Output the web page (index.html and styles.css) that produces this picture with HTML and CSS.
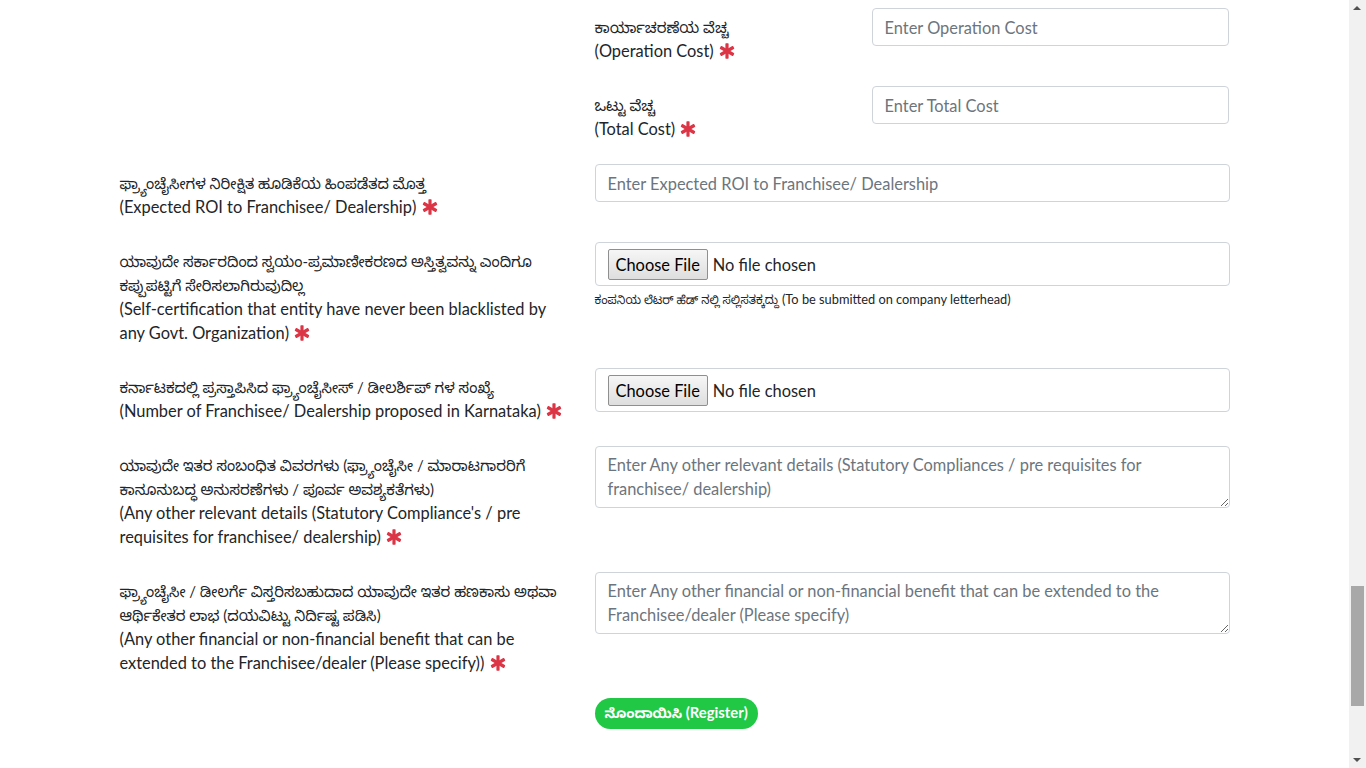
FILE: index.html
```html
<!DOCTYPE html>
<html lang="kn">
<head>
    <meta charset="UTF-8">
    <meta name="viewport" content="width=device-width, initial-scale=1.0">
    <title>ಫ್ರ್ಯಾಂಚೈಸಿ ನೋಂದಣಿ</title>
    <link rel="stylesheet" href="styles.css">
</head>
<body>
    <svg class="sprite" aria-hidden="true">
        <symbol id="star" viewBox="0 0 16 16">
            <g fill="#dc3545">
                <rect x="6.4" y="0.3" width="3.2" height="15.4" rx="0.7"/>
                <rect x="6.4" y="0.3" width="3.2" height="15.4" rx="0.7" transform="rotate(60 8 8)"/>
                <rect x="6.4" y="0.3" width="3.2" height="15.4" rx="0.7" transform="rotate(120 8 8)"/>
            </g>
        </symbol>
    </svg>

    <div class="container">
        <form id="franchiseForm">
            <div class="row">
                <div class="col-5"></div>
                <div class="col-7">
                    <div class="form-group row">
                        <label class="col-5 col-form-label" for="opCost"><span class="kn">ಕಾರ್ಯಾಚರಣೆಯ ವೆಚ್ಚ</span><br>(Operation Cost) <svg class="req"><use href="#star"/></svg></label>
                        <div class="col-7">
                            <input type="text" id="opCost" class="form-control" placeholder="Enter Operation Cost">
                        </div>
                    </div>
                    <div class="form-group row">
                        <label class="col-5 col-form-label" for="totalCost"><span class="kn">ಒಟ್ಟು ವೆಚ್ಚ</span><br>(Total Cost) <svg class="req"><use href="#star"/></svg></label>
                        <div class="col-7">
                            <input type="text" id="totalCost" class="form-control" placeholder="Enter Total Cost">
                        </div>
                    </div>
                </div>
            </div>

            <div class="form-group row">
                <label class="col-5 col-form-label" for="roi"><span class="kn">ಫ್ರ್ಯಾಂಚೈಸೀಗಳ ನಿರೀಕ್ಷಿತ ಹೂಡಿಕೆಯ ಹಿಂಪಡೆತದ ಮೊತ್ತ</span><br>(Expected ROI to Franchisee/ Dealership) <svg class="req"><use href="#star"/></svg></label>
                <div class="col-7">
                    <input type="text" id="roi" class="form-control" placeholder="Enter Expected ROI to Franchisee/ Dealership">
                </div>
            </div>

            <div class="form-group row">
                <label class="col-5 col-form-label" for="selfCert"><span class="kn">ಯಾವುದೇ ಸರ್ಕಾರದಿಂದ ಸ್ವಯಂ-ಪ್ರಮಾಣೀಕರಣದ ಅಸ್ತಿತ್ವವನ್ನು ಎಂದಿಗೂ ಕಪ್ಪುಪಟ್ಟಿಗೆ ಸೇರಿಸಲಾಗಿರುವುದಿಲ್ಲ</span><br>(Self-certification that entity have never been blacklisted by any Govt. Organization) <svg class="req"><use href="#star"/></svg></label>
                <div class="col-7">
                    <div class="file-box">
                        <input type="file" id="selfCert" class="file-input">
                    </div>
                    <small class="form-text"><span class="kn">ಕಂಪನಿಯ ಲೆಟರ್ ಹೆಡ್ ನಲ್ಲಿ ಸಲ್ಲಿಸತಕ್ಕದ್ದು</span> (To be submitted on company letterhead)</small>
                </div>
            </div>

            <div class="form-group row">
                <label class="col-5 col-form-label" for="numDealers"><span class="kn">ಕರ್ನಾಟಕದಲ್ಲಿ ಪ್ರಸ್ತಾಪಿಸಿದ ಫ್ರ್ಯಾಂಚೈಸೀಸ್ / ಡೀಲರ್ಶಿಪ್ ಗಳ ಸಂಖ್ಯೆ</span><br>(Number of Franchisee/ Dealership proposed in Karnataka) <svg class="req"><use href="#star"/></svg></label>
                <div class="col-7">
                    <div class="file-box">
                        <input type="file" id="numDealers" class="file-input">
                    </div>
                </div>
            </div>

            <div class="form-group row">
                <label class="col-5 col-form-label" for="otherDetails"><span class="kn">ಯಾವುದೇ ಇತರ ಸಂಬಂಧಿತ ವಿವರಗಳು (ಫ್ರ್ಯಾಂಚೈಸೀ / ಮಾರಾಟಗಾರರಿಗೆ ಕಾನೂನುಬದ್ಧ ಅನುಸರಣೆಗಳು / ಪೂರ್ವ ಅವಶ್ಯಕತೆಗಳು)</span><br>(Any other relevant details (Statutory Compliance's / pre requisites for franchisee/ dealership) <svg class="req"><use href="#star"/></svg></label>
                <div class="col-7">
                    <textarea id="otherDetails" class="form-control" rows="2" placeholder="Enter Any other relevant details (Statutory Compliances / pre requisites for franchisee/ dealership)"></textarea>
                </div>
            </div>

            <div class="form-group row">
                <label class="col-5 col-form-label" for="benefits"><span class="kn">ಫ್ರ್ಯಾಂಚೈಸೀ / ಡೀಲರ್ಗೆ ವಿಸ್ತರಿಸಬಹುದಾದ ಯಾವುದೇ ಇತರ ಹಣಕಾಸು ಅಥವಾ ಆರ್ಥಿಕೇತರ ಲಾಭ (ದಯವಿಟ್ಟು ನಿರ್ದಿಷ್ಟ ಪಡಿಸಿ)</span><br>(Any other financial or non-financial benefit that can be extended to the Franchisee/dealer (Please specify)) <svg class="req"><use href="#star"/></svg></label>
                <div class="col-7">
                    <textarea id="benefits" class="form-control" rows="2" placeholder="Enter Any other financial or non-financial benefit that can be extended to the Franchisee/dealer (Please specify)"></textarea>
                </div>
            </div>

            <div class="row">
                <div class="col-5"></div>
                <div class="col-7">
                    <button type="submit" class="btn-register"><span class="kn">ನೊಂದಾಯಿಸಿ</span> (Register)</button>
                </div>
            </div>
        </form>
    </div>

    <!-- page scrollbar, mid-way down the long form -->
    <div class="scrollbar" aria-hidden="true">
        <span class="arrow up"></span>
        <span class="thumb"></span>
        <span class="arrow down"></span>
    </div>
</body>
</html>
```

FILE: styles.css
```css
body {
    margin: 0;
    padding-right: 17px;
    font-family: Lato, "Noto Sans", "Noto Sans Kannada", sans-serif;
    font-size: 16.4px;
    line-height: 1.5;
    color: #212529;
    background: #fff;
}
.sprite {
    display: none;
}
.kn {
    font-size: 0.91em;
}
.container {
    max-width: 1140px;
    margin: 0 auto;
    padding: 8px 15px 30px;
    box-sizing: border-box;
}
.row {
    display: flex;
    margin: 0 -15px;
}
.col-5,
.col-7 {
    padding: 0 15px;
    box-sizing: border-box;
}
.col-5 {
    flex: 0 0 41.666667%;
    max-width: 41.666667%;
}
.col-7 {
    flex: 0 0 58.333333%;
    max-width: 58.333333%;
}
.form-group {
    margin-bottom: 16px;
}
.col-form-label {
    padding: 7px 15px;
    line-height: 24px;
}
.req {
    width: 16px;
    height: 16px;
    vertical-align: -2px;
    margin-left: 1px;
}
.form-control {
    display: block;
    width: 100%;
    box-sizing: border-box;
    height: 38px;
    padding: 6px 12px;
    font-family: inherit;
    font-size: 16.4px;
    line-height: 24px;
    color: #495057;
    background: #fff;
    border: 1px solid #ced4da;
    border-radius: 4px;
}
.form-control::placeholder {
    color: #6c757d;
}
textarea.form-control {
    height: 62px;
    resize: vertical;
}
.file-box {
    height: 44px;
    box-sizing: border-box;
    padding: 6px 12px;
    border: 1px solid #ced4da;
    border-radius: 4px;
    display: flex;
    align-items: center;
}
.file-input {
    font-family: inherit;
    font-size: 16.4px;
    color: #212529;
}
.file-input::file-selector-button {
    font-family: inherit;
    font-size: 16.4px;
    height: 31px;
    padding: 0 7px;
    margin-right: 5px;
    color: #000;
    background: linear-gradient(#f6f6f6, #dedede);
    border: 1px solid #8f8f8f;
    border-radius: 2px;
}
.form-text {
    display: block;
    margin-top: 4px;
    font-size: 12.8px;
    line-height: 1.5;
}
.btn-register {
    height: 31px;
    padding: 0 10px 0 10px;
    font-family: inherit;
    font-size: 14.8px;
    font-weight: bold;
    color: #fff;
    background: #20c845;
    border: none;
    border-radius: 16px;
    cursor: pointer;
}
.btn-register .kn {
    font-size: 0.92em;
}
.btn-register:hover {
    background: #1aad3b;
}
.scrollbar {
    position: fixed;
    top: 0;
    right: 0;
    bottom: 0;
    width: 17px;
    background: #f1f1f1;
}
.scrollbar .thumb {
    position: absolute;
    left: 2px;
    right: 2px;
    top: 586px;
    height: 120px;
    background: #a8a8a8;
}
.scrollbar .arrow {
    position: absolute;
    left: 4px;
    width: 0;
    height: 0;
    border-left: 4px solid transparent;
    border-right: 4px solid transparent;
}
.scrollbar .up {
    top: 6px;
    border-bottom: 4px solid #505050;
}
.scrollbar .down {
    bottom: 6px;
    border-top: 4px solid #505050;
}
```
